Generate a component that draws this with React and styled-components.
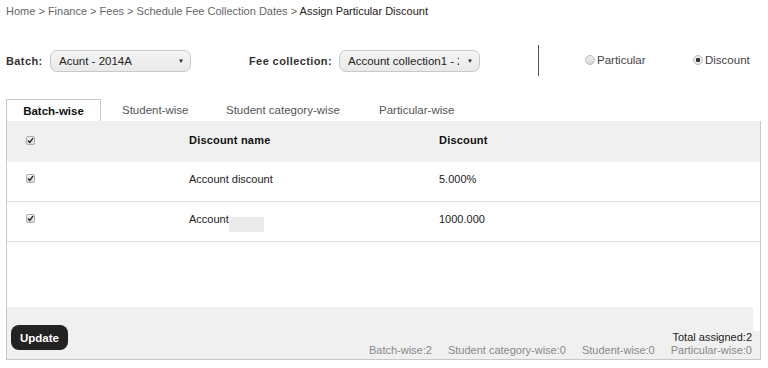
import styled, { createGlobalStyle } from "styled-components"

//DATA
const crumbs = ["Home", "Finance", "Fees", "Schedule Fee Collection Dates"]
const tabs = [
  { label: "Batch-wise", width: 95 },
  { label: "Student-wise", width: 104 },
  { label: "Student category-wise", width: 153 },
  { label: "Particular-wise", width: 120 },
]
const rows = [
  { name: "Account discount", value: "5.000%" },
  { name: "Account", value: "1000.000", masked: true },
]
const stats = [
  "Batch-wise:2",
  "Student category-wise:0",
  "Student-wise:0",
  "Particular-wise:0",
]

function Check() {
  return (
    <CheckBox>
      <svg width="7" height="7" viewBox="0 0 7 7">
        <path d="M1 3.6 L2.8 5.4 L6 1.2" fill="none" stroke="#222" strokeWidth="1.4" />
      </svg>
    </CheckBox>
  )
}

export default function App() {

  return (

    <Page>
      <GlobalStyle />

      <Breadcrumb>
        {crumbs.map(c => <span key={c}>{c} &gt; </span>)}
        <Current>Assign Particular Discount</Current>
      </Breadcrumb>

      <Filters>
        <Label $width={44}>Batch:</Label>
        <Select>
          <SelectText>Acunt - 2014A</SelectText>
          <Arrow>▼</Arrow>
        </Select>

        <Label $width={90} $left={58}>Fee collection:</Label>
        <Select>
          <SelectText>Account collection1 - 2014</SelectText>
          <Arrow>▼</Arrow>
        </Select>

        <Divider />

        <RadioItem $left={46}>
          <Radio />
          Particular
        </RadioItem>
        <RadioItem>
          <Radio $checked />
          Discount
        </RadioItem>
      </Filters>

      <Tabs>
        {tabs.map((t, i) => (
          <Tab key={t.label} $active={i === 0} $width={t.width}>{t.label}</Tab>
        ))}
      </Tabs>

      <Panel>
        <HeaderRow>
          <CheckCell><Check /></CheckCell>
          <HeadCell>Discount name</HeadCell>
          <HeadCell>Discount</HeadCell>
        </HeaderRow>

        {rows.map(r => (
          <Row key={r.name}>
            <CheckCell><Check /></CheckCell>
            <Cell>
              {r.name}
              {r.masked && <Mask />}
            </Cell>
            <Cell>{r.value}</Cell>
          </Row>
        ))}

        <Spacer />

        <Footer>
          <UpdateButton>Update</UpdateButton>
          <Summary>
            <Total>Total assigned:2</Total>
            <Stats>
              {stats.map(s => <span key={s}>{s}</span>)}
            </Stats>
          </Summary>
        </Footer>
      </Panel>
    </Page>

  )

}

//STYLES

const GlobalStyle = createGlobalStyle`
  body {
    margin: 0;
    background: #fff;
    font-family: "Liberation Sans", Arial, sans-serif;
    font-size: 11px;
    color: #222;
  }
`
const Page = styled.div`
  width: 768px;
  height: 368px;
  padding: 0 7px 0 6px;
  box-sizing: border-box;
  overflow: hidden;
`
const Breadcrumb = styled.div`
  padding-top: 4px;
  height: 14px;
  line-height: 14px;
  font-size: 11px;
  color: #666;
  white-space: nowrap;
`
const Current = styled.span`
  color: #222;
`
const Filters = styled.div`
  display: flex;
  align-items: center;
  margin-top: 27px;
  height: 31px;
`
const Label = styled.span`
  flex: none;
  width: ${p => p.$width}px;
  margin-left: ${p => p.$left || 0}px;
  font-weight: bold;
  font-size: 11px;
  color: #333;
  letter-spacing: 0.4px;
  white-space: nowrap;
`
const Select = styled.div`
  flex: none;
  display: flex;
  align-items: center;
  justify-content: space-between;
  width: 141px;
  height: 22px;
  box-sizing: border-box;
  padding: 0 6px 0 8px;
  border: 1px solid #c8c8c8;
  border-radius: 7px;
  background: linear-gradient(#f4f4f4, #e9e9e9);
  color: #222;
  font-size: 11.5px;
  white-space: nowrap;
  overflow: hidden;
`
const SelectText = styled.span`
  flex: 1;
  min-width: 0;
  overflow: hidden;
`
const Arrow = styled.span`
  flex: none;
  font-size: 6px;
  color: #222;
  margin-left: 8px;
`
const Divider = styled.div`
  flex: none;
  width: 1px;
  height: 31px;
  background: #555;
  margin-left: 58px;
`
const RadioItem = styled.label`
  flex: none;
  display: flex;
  align-items: center;
  gap: 2px;
  width: 108px;
  margin-left: ${p => p.$left || 0}px;
  margin-top: -1px;
  color: #444;
  font-size: 11.5px;
`
const Radio = styled.span`
  width: 10px;
  height: 10px;
  box-sizing: border-box;
  border-radius: 50%;
  border: 1px solid #bbb;
  background: ${p => p.$checked
    ? "radial-gradient(circle, #333 0 2px, #eee 2.5px)"
    : "linear-gradient(#eee, #d8d8d8)"};
`
const Tabs = styled.div`
  display: flex;
  margin-top: 23px;
  height: 22px;
`
const Tab = styled.div`
  flex: none;
  display: flex;
  align-items: center;
  box-sizing: border-box;
  width: ${p => p.$width}px;
  height: 22px;
  font-size: 11.5px;
  ${p => p.$active ? `
    justify-content: center;
    border: 1px solid #c8c8c8;
    border-bottom: none;
    background: #fff;
    font-weight: bold;
    color: #111;
    margin-right: 21px;
  ` : `
    color: #555;
  `}
`
const Panel = styled.div`
  display: flex;
  flex-direction: column;
  height: 239px;
  border: 1px solid #c8c8c8;
  border-top: none;
  box-sizing: border-box;
`
const HeaderRow = styled.div`
  display: grid;
  grid-template-columns: 182px 250px 1fr;
  align-items: center;
  height: 41px;
  padding-bottom: 3px;
  box-sizing: border-box;
  background: #f0f0f0;
`
const Row = styled(HeaderRow)`
  height: 40px;
  padding-bottom: 6px;
  background: #fff;
  border-bottom: 1px solid #ddd;
`
const CheckCell = styled.div`
  padding-left: 19px;
  display: flex;
`
const CheckBox = styled.span`
  display: flex;
  align-items: center;
  justify-content: center;
  width: 9px;
  height: 9px;
  box-sizing: border-box;
  border: 1px solid #aaa;
  border-radius: 2px;
  background: linear-gradient(#f6f6f6, #dcdcdc);
`
const HeadCell = styled.div`
  font-weight: bold;
  color: #111;
  letter-spacing: 0.2px;
`
const Cell = styled.div`
  display: flex;
  align-items: center;
  color: #222;
`
const Mask = styled.span`
  width: 35px;
  height: 15px;
  margin-top: 12px;
  background: #ebebeb;
`
const Spacer = styled.div`
  height: 65px;
`
const Footer = styled.div`
  flex: 1;
  display: flex;
  justify-content: space-between;
  align-items: flex-end;
  padding: 0 8px 2px 4px;
  background: #f0f0f0;
  position: relative;

  &::after {
    content: "";
    position: absolute;
    right: 0;
    top: 0;
    width: 7px;
    height: 24px;
    background: #fff;
  }
`
const UpdateButton = styled.button`
  height: 25px;
  padding: 0 9px;
  margin-bottom: 7px;
  border: none;
  border-radius: 8px;
  background: #222;
  color: #fff;
  font-family: "Liberation Sans", Arial, sans-serif;
  font-weight: bold;
  font-size: 11.5px;
`
const Summary = styled.div`
  display: flex;
  flex-direction: column;
  align-items: flex-end;
`
const Total = styled.div`
  color: #222;
  line-height: 13px;
`
const Stats = styled.div`
  display: flex;
  gap: 16px;
  color: #888;
  line-height: 13px;
`
